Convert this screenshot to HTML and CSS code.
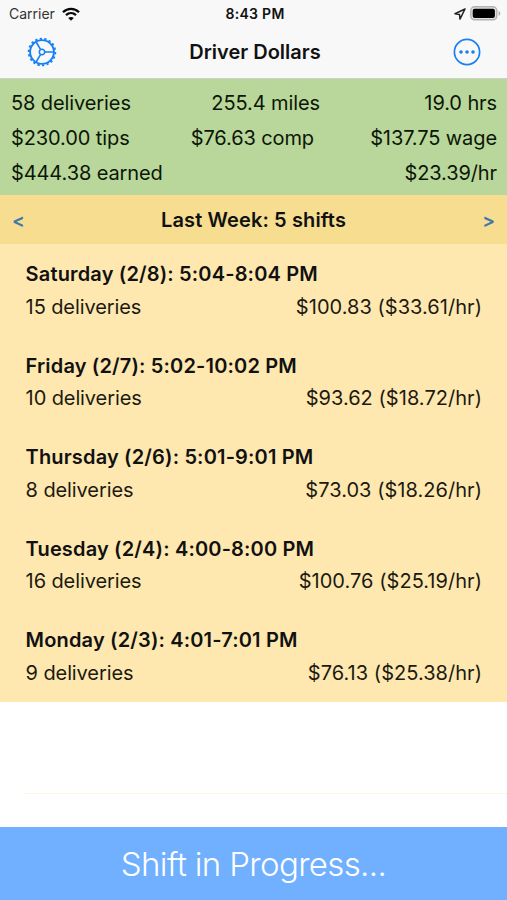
FILE: index.html
```html
<!DOCTYPE html>
<html lang="en">
<head>
<meta charset="utf-8">
<title>Driver Dollars</title>
<link rel="stylesheet" href="styles.css">
</head>
<body>
<div class="screen">
  <header class="top">
    <div class="status">
      <div class="carrier"><span>Carrier</span>
        <svg class="wifi" width="18" height="14" viewBox="0 0 18 14" fill="none" stroke="#080808" stroke-width="2.3"><path d="M1 5.2C5.6.7 12.4.7 17 5.2M4 8.2c2.900-2.700 7.100-2.700 10 0"/><path d="M9 13.800 6.200 11c1.600-1.500 4-1.500 5.600 0z" fill="#080808" stroke="none"/></svg>
      </div>
      <span class="clock">8:43 PM</span>
      <div class="indicators">
        <svg width="12" height="12" viewBox="0 0 12 12" fill="none" stroke="#222" stroke-width="1.5" stroke-linejoin="round"><path d="M11 1 1 5.800l4.500.6.5 4.700z"/></svg>
        <svg width="31" height="15" viewBox="0 0 31 15"><rect x=".8" y=".8" width="26" height="13" rx="3.800" fill="#e2e2e2" stroke="#b2b2b2" stroke-width="1.400"/><rect x="2.700" y="2.700" width="22.200" height="9.200" rx="2" fill="#000"/><path d="M28.600 5c2.200.8 2.200 4 0 4.800z" fill="#aaa"/></svg>
      </div>
    </div>
    <nav class="navbar">
      <svg class="gear" width="30" height="30" viewBox="-15 -15 30 30" fill="none" stroke="#1580f4"><circle r="11.900" stroke-width="1.900"/><circle r="13.300" stroke-width="1.900" pathLength="36" stroke-dasharray="1 1"/><circle r="2.700" stroke-width="1.500"/><path d="M2.700 0H11.500M-1.400-2.400-5.800-10M-1.400 2.400-5.800 10" stroke-width="1.600"/></svg>
      <h1>Driver Dollars</h1>
      <svg class="more" width="28" height="28" viewBox="-14 -14 28 28"><circle r="12.600" fill="none" stroke="#1580f4" stroke-width="1.700"/><g fill="#1580f4"><circle cx="-6" r="1.800"/><circle r="1.800"/><circle cx="6" r="1.800"/></g></svg>
    </nav>
  </header>
  <section class="summary">
    <div class="line"><span>58 deliveries</span><span class="miles">255.4 miles</span><span>19.0 hrs</span></div>
    <div class="line"><span>$230.00 tips</span><span class="comp">$76.63 comp</span><span>$137.75 wage</span></div>
    <div class="line"><span>$444.38 earned</span><span>$23.39/hr</span></div>
  </section>
  <div class="week"><span class="arrow">&lt;</span><h2>Last Week: 5 shifts</h2><span class="arrow">&gt;</span></div>
  <main class="list">
    <article class="shift"><h3>Saturday (2/8): 5:04-8:04 PM</h3><p><span>15 deliveries</span><span class="pay">$100.83 ($33.61/hr)</span></p></article>
    <article class="shift"><h3>Friday (2/7): 5:02-10:02 PM</h3><p><span>10 deliveries</span><span class="pay">$93.62 ($18.72/hr)</span></p></article>
    <article class="shift"><h3>Thursday (2/6): 5:01-9:01 PM</h3><p><span>8 deliveries</span><span class="pay">$73.03 ($18.26/hr)</span></p></article>
    <article class="shift"><h3>Tuesday (2/4): 4:00-8:00 PM</h3><p><span>16 deliveries</span><span class="pay">$100.76 ($25.19/hr)</span></p></article>
    <article class="shift"><h3>Monday (2/3): 4:01-7:01 PM</h3><p><span>9 deliveries</span><span class="pay">$76.13 ($25.38/hr)</span></p></article>
    <div class="empty"></div>
  </main>
  <footer class="progress">Shift in Progress...</footer>
</div>
</body>
</html>
```
FILE: styles.css
```css
* { box-sizing: border-box; }
body { margin: 0; background: #fff; color: #111; font-family: Inter, "Liberation Sans", sans-serif; font-size: 20px; }
h1, h2, h3, p { margin: 0; font-size: inherit; font-weight: 600; }
svg { display: block; flex: none; }
.screen { width: 507px; height: 900px; display: flex; flex-direction: column; overflow: hidden; }
.top { height: 79px; background: #f8f8f8; border-bottom: 1px solid #cbd3c5; flex: none; }
.status { height: 26px; display: grid; grid-template-columns: 1fr auto 1fr; align-items: center; padding: 1px 6px 0 9px; font-size: 14px; }
.carrier { display: flex; align-items: center; gap: 7px; color: #333; }
.clock { font-weight: 600; font-size: 14px; letter-spacing: .3px; }
.indicators { display: flex; align-items: center; justify-content: flex-end; gap: 4px; }
.navbar { height: 52px; display: flex; align-items: center; justify-content: space-between; padding: 0 25.500px 0 26.500px; }
.navbar h1 { letter-spacing: 0; }
.summary { height: 116px; background: #b9d79a; padding: 7px 10px 5px 11px; display: flex; flex-direction: column; flex: none; color: #0c1608; }
.line { flex: 1; display: flex; align-items: center; justify-content: space-between; letter-spacing: -.1px; }
.miles { margin-right: 24px; }
.comp { margin-left: 5px; }
.week { height: 49px; background: #f6dd90; display: flex; align-items: center; justify-content: space-between; padding: 1px 12px 0; flex: none; }
.week h2 { letter-spacing: .12px; }
.arrow { color: #3e78ad; font-weight: 600; font-size: 19px; }
.list { flex: 1; }
.shift { height: 91.600px; background: #fee8b0; padding: 14px 25px 0 25.600px; line-height: 32.500px; }
.shift h3 { letter-spacing: .16px; }
.shift p { display: flex; justify-content: space-between; font-weight: 400; letter-spacing: -.1px; color: #1c1a10; }
.pay { letter-spacing: .04px; }
.empty { height: 92px; margin-left: 24px; border-bottom: 1px solid #fff5dc; }
.progress { height: 73px; flex: none; background: #70b0ff; color: #fff; display: flex; align-items: center; justify-content: center; font-size: 33px; font-weight: 300; letter-spacing: -.64px; }
```
